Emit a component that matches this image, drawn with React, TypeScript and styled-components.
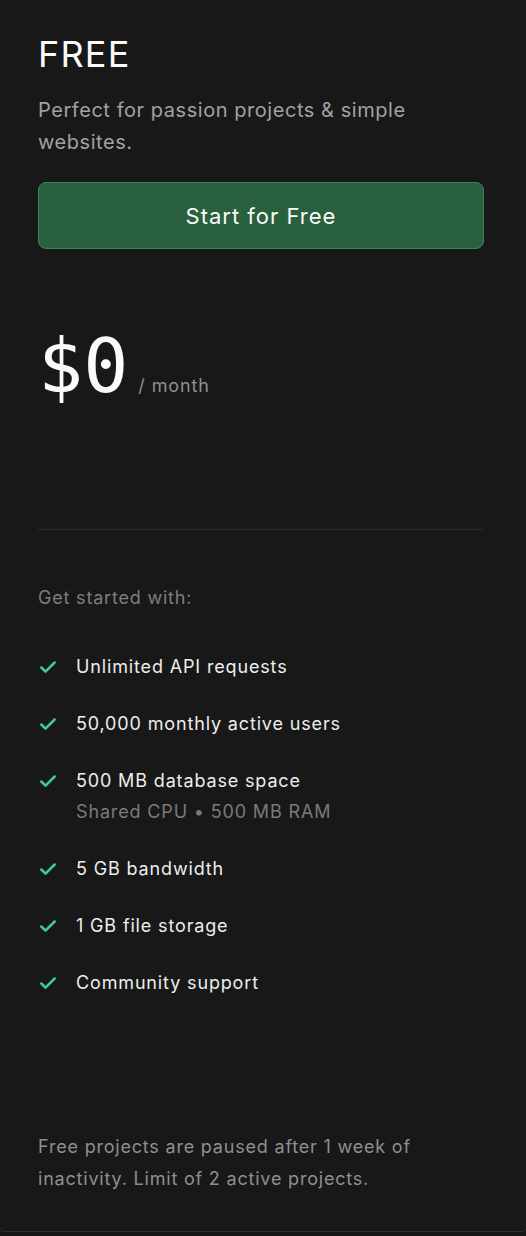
import React from "react";
import styled, { createGlobalStyle } from "styled-components";

const Global = createGlobalStyle`
  html, body { margin: 0; padding: 0; background: #171717; }
  body { font-family: "Inter", "Noto Sans", sans-serif; -webkit-font-smoothing: antialiased; }
  * { box-sizing: border-box; }
`;

const Card = styled.div`
  width: 526px;
  height: 1232px;
  background: #181818;
  border-bottom: 1px solid #2e2e2e;
  border-radius: 0 0 4px 4px;
  padding: 32px 42px 0 38px;
  display: flex;
  flex-direction: column;
`;

const Title = styled.h2`
  margin: 0;
  font-size: 36px;
  line-height: 44px;
  font-weight: 400;
  letter-spacing: 1.2px;
  color: #fafafa;
`;

const Subtitle = styled.p`
  margin: 18px 0 0;
  max-width: 420px;
  font-size: 20px;
  line-height: 32px;
  letter-spacing: 0.55px;
  color: #a1a1a1;
`;

const Button = styled.button`
  margin-top: 24px;
  height: 67px;
  width: 100%;
  background: #29613f;
  border: 1px solid #3b8455;
  border-radius: 8px;
  color: #fafafa;
  font-family: inherit;
  font-size: 22px;
  letter-spacing: 1px;
  cursor: pointer;
`;

const PriceRow = styled.div`
  margin-top: 80px;
  display: flex;
  align-items: baseline;
  gap: 10px;
`;

const Amount = styled.span`
  font-family: "DejaVu Sans Mono", monospace;
  font-size: 75px;
  line-height: 75px;
  color: #fafafa;
`;

const Period = styled.span`
  font-size: 18px;
  letter-spacing: 0.9px;
  color: #8f8f8f;
`;

const Divider = styled.hr`
  margin: 125px 0 0;
  border: none;
  border-top: 1px solid #2b2b2b;
`;

const ListLabel = styled.p`
  margin: 54px 0 0;
  font-size: 18px;
  line-height: 28px;
  letter-spacing: 0.8px;
  color: #7e7e7e;
`;

const List = styled.ul`
  list-style: none;
  margin: 41px 0 0;
  padding: 0;
  display: flex;
  flex-direction: column;
  gap: 29px;
`;

const Item = styled.li`
  display: flex;
  gap: 18px;
  align-items: flex-start;
`;

const CheckWrap = styled.span`
  width: 20px;
  height: 28px;
  display: flex;
  align-items: center;
  flex-shrink: 0;
`;

const ItemText = styled.div`
  display: flex;
  flex-direction: column;
`;

const Main = styled.span`
  font-size: 18px;
  line-height: 28px;
  letter-spacing: 0.85px;
  color: #ededed;
`;

const Sub = styled.span`
  margin-top: 3px;
  font-size: 18px;
  line-height: 28px;
  letter-spacing: 0.85px;
  color: #7a7a7a;
`;

const Footnote = styled.p`
  margin: 134px 0 0;
  max-width: 420px;
  font-size: 18px;
  line-height: 32px;
  letter-spacing: 0.8px;
  color: #8f8f8f;
`;

const Check = () => (
  <svg width="21" height="21" viewBox="0 0 24 24" fill="none" stroke="#3ecf8e" strokeWidth="3" strokeLinecap="round" strokeLinejoin="round">
    <path d="M20 6 9 17l-5-5" />
  </svg>
);

const features: { main: string; sub?: string }[] = [
  { main: "Unlimited API requests" },
  { main: "50,000 monthly active users" },
  { main: "500 MB database space", sub: "Shared CPU • 500 MB RAM" },
  { main: "5 GB bandwidth" },
  { main: "1 GB file storage" },
  { main: "Community support" },
];

export default function App() {
  return (
    <>
      <Global />
      <Card>
        <Title>FREE</Title>
        <Subtitle>Perfect for passion projects &amp; simple websites.</Subtitle>
        <Button>Start for Free</Button>
        <PriceRow>
          <Amount>$0</Amount>
          <Period>/ month</Period>
        </PriceRow>
        <Divider />
        <ListLabel>Get started with:</ListLabel>
        <List>
          {features.map((f) => (
            <Item key={f.main}>
              <CheckWrap>
                <Check />
              </CheckWrap>
              <ItemText>
                <Main>{f.main}</Main>
                {f.sub && <Sub>{f.sub}</Sub>}
              </ItemText>
            </Item>
          ))}
        </List>
        <Footnote>Free projects are paused after 1 week of inactivity. Limit of 2 active projects.</Footnote>
      </Card>
    </>
  );
}
